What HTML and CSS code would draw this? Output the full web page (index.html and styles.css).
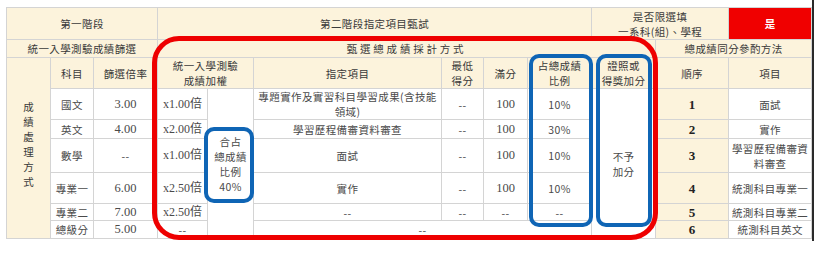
FILE: index.html
```html
<!DOCTYPE html>
<html lang="zh-Hant">
<head>
<meta charset="utf-8">
<title>甄選總成績採計方式</title>
<link rel="stylesheet" href="styles.css">
</head>
<body>
<div class="sheet">
  <table class="grid">
    <colgroup>
      <col class="c-a"><col class="c-b"><col class="c-c"><col class="c-d"><col class="c-e"><col class="c-f">
      <col class="c-g"><col class="c-h"><col class="c-i"><col class="c-j"><col class="c-k"><col class="c-l">
    </colgroup>
    <tr class="r1">
      <td class="hd" colspan="3">第一階段</td>
      <td class="hd" colspan="6">第二階段指定項目甄試</td>
      <td class="hd" colspan="2">是否限選填<br>一系科(組)、學程</td>
      <td class="red">是</td>
    </tr>
    <tr class="r2">
      <td class="hd" colspan="3">統一入學測驗成績篩選</td>
      <td class="hd wide" colspan="7">甄選總成績採計方式</td>
      <td class="hd" colspan="2">總成績同分參酌方法</td>
    </tr>
    <tr class="r3">
      <td class="hd vert-cell" rowspan="7"><span class="vert">成績處理方式</span></td>
      <td class="hd">科目</td>
      <td class="hd">篩選倍率</td>
      <td class="hd" colspan="2">統一入學測驗<br>成績加權</td>
      <td class="hd">指定項目</td>
      <td class="hd">最低<br>得分</td>
      <td class="hd">滿分</td>
      <td class="hd">占總成績<br>比例</td>
      <td class="hd">證照或<br>得獎加分</td>
      <td class="hd">順序</td>
      <td class="hd">項目</td>
    </tr>
    <tr class="r4">
      <td>國文</td>
      <td class="n">3.00</td>
      <td class="n wt">x1.00倍</td>
      <td rowspan="6" class="share">合占<br>總成績<br>比例<br>40%</td>
      <td>專題實作及實習科目學習成果(含技能<br>領域)</td>
      <td>--</td>
      <td class="n">100</td>
      <td>10%</td>
      <td rowspan="6" class="share">不予<br>加分</td>
      <td class="hd ord">1</td>
      <td>面試</td>
    </tr>
    <tr class="r5">
      <td>英文</td>
      <td class="n">4.00</td>
      <td class="n wt">x2.00倍</td>
      <td>學習歷程備審資料審查</td>
      <td>--</td>
      <td class="n">100</td>
      <td>30%</td>
      <td class="hd ord">2</td>
      <td>實作</td>
    </tr>
    <tr class="r6">
      <td>數學</td>
      <td>--</td>
      <td class="n wt">x1.00倍</td>
      <td>面試</td>
      <td>--</td>
      <td class="n">100</td>
      <td>10%</td>
      <td class="hd ord">3</td>
      <td>學習歷程備審資<br>料審查</td>
    </tr>
    <tr class="r7">
      <td>專業一</td>
      <td class="n">6.00</td>
      <td class="n wt">x2.50倍</td>
      <td>實作</td>
      <td>--</td>
      <td class="n">100</td>
      <td>10%</td>
      <td class="hd ord">4</td>
      <td>統測科目專業一</td>
    </tr>
    <tr class="r8">
      <td>專業二</td>
      <td class="n">7.00</td>
      <td class="n wt">x2.50倍</td>
      <td>--</td>
      <td>--</td>
      <td>--</td>
      <td>--</td>
      <td class="hd ord">5</td>
      <td>統測科目專業二</td>
    </tr>
    <tr class="r9">
      <td>總級分</td>
      <td class="n">5.00</td>
      <td>--</td>
      <td colspan="4">--</td>
      <td class="hd ord">6</td>
      <td>統測科目英文</td>
    </tr>
  </table>
  <div class="mark mark-red"></div>
  <div class="mark mark-blue box1"></div>
  <div class="mark mark-blue box2"></div>
  <div class="mark mark-blue box3"></div>
</div>
</body>
</html>
```
FILE: styles.css
```css
html, body {
  margin: 0;
  padding: 0;
  background: #ffffff;
}

.sheet {
  position: relative;
  display: inline-block;
  padding: 7px 0 2px 6px;
  border-right: 2px solid #2a2a2a;
}

.grid {
  border-collapse: collapse;
  table-layout: fixed;
  width: 805px;
  font-family: "Noto Sans CJK TC", "Noto Sans", sans-serif;
  font-size: 10.5px;
  letter-spacing: 0.4px;
  line-height: 15px;
  color: #4a4a4a;
}

.c-a { width: 44px; }
.c-b { width: 43px; }
.c-c { width: 64px; }
.c-d { width: 50px; }
.c-e { width: 46px; }
.c-f { width: 188px; }
.c-g { width: 42px; }
.c-h { width: 44px; }
.c-i { width: 64px; }
.c-j { width: 64px; }
.c-k { width: 73px; }
.c-l { width: 83px; }

.grid td {
  border: 1px solid #d4d4d4;
  padding: 0 1px;
  text-align: center;
  vertical-align: middle;
  background: #ffffff;
  white-space: nowrap;
}

.grid td.hd {
  background: #fcf3dc;
  color: #3a3a3a;
}

.r1 { height: 32px; }
.r2 { height: 18px; }
.r3 { height: 31px; }
.r4 { height: 31px; }
.r5 { height: 19px; }
.r6 { height: 34px; }
.r7 { height: 31px; }
.r8 { height: 17px; }
.r9 { height: 18px; }

.grid td.red {
  background: #f00000;
  color: #ffffff;
  font-weight: bold;
}

.grid td.wide {
  letter-spacing: 2.8px;
}

.vert {
  writing-mode: vertical-rl;
  text-orientation: upright;
  letter-spacing: 4.5px;
  display: inline-block;
}

.n {
  font-family: "Liberation Serif", "Noto Sans CJK TC", serif;
  font-size: 12.5px;
  letter-spacing: 0;
}

.grid td.wt {
  font-size: 12px;
  padding: 0;
}

.grid td.ord {
  font-family: "Liberation Serif", serif;
  font-weight: bold;
  font-size: 13px;
  color: #222;
}

.share {
  line-height: 15px;
}

.mark {
  position: absolute;
  box-sizing: border-box;
  pointer-events: none;
}

.mark-red {
  left: 152px;
  top: 36px;
  width: 506px;
  height: 204px;
  border: 5px solid #ee0000;
  border-radius: 27px;
}

.mark-blue {
  border: 4.5px solid #0f65b5;
  border-radius: 10px;
}

.box1 {
  left: 204px;
  top: 127px;
  width: 50px;
  height: 76px;
}

.box2 {
  left: 529px;
  top: 54px;
  width: 64px;
  height: 173px;
}

.box3 {
  left: 596px;
  top: 54px;
  width: 56px;
  height: 173px;
}
```
